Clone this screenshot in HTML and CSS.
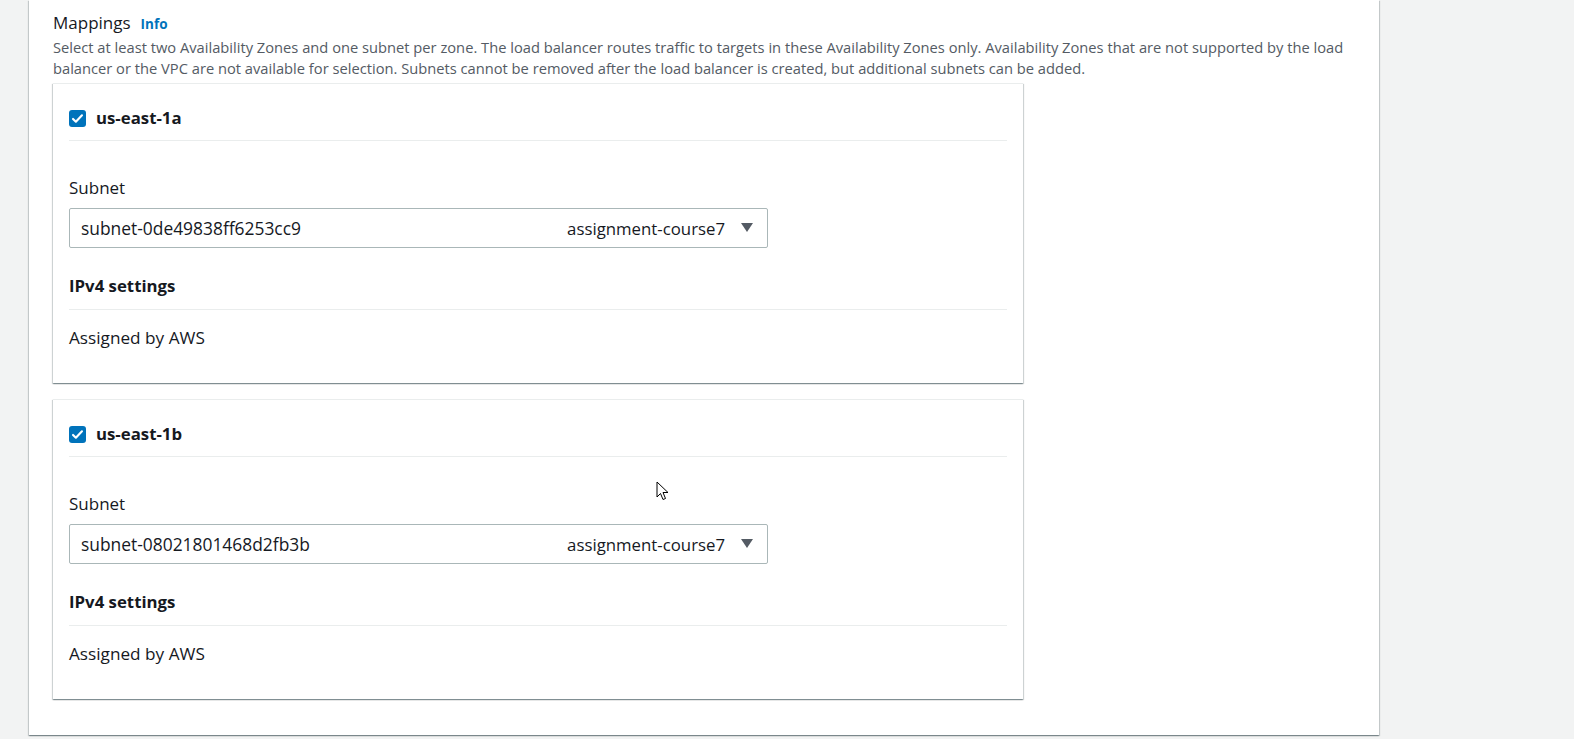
FILE: index.html
```html
<!DOCTYPE html>
<html>
<head>
<meta charset="utf-8">
<link rel="stylesheet" href="styles.css">
</head>
<body>
<div class="panel">
  <div class="heading">
    <span class="title">Mappings</span>
    <span class="info">Info</span>
  </div>
  <p class="desc">Select at least two Availability Zones and one subnet per zone. The load balancer routes traffic to targets in these Availability Zones only. Availability Zones that are not supported by the load balancer or the VPC are not available for selection. Subnets cannot be removed after the load balancer is created, but additional subnets can be added.</p>
  <div class="cards">
    <div class="card">
      <div class="card-head">
        <span class="check"><svg viewBox="0 0 16 16" width="13" height="13"><path d="M2.5 8.5l3.5 3.5 7.5-8" fill="none" stroke="#fff" stroke-width="2.6" stroke-linecap="round" stroke-linejoin="round"/></svg></span>
        <span class="zone">us-east-1a</span>
      </div>
      <div class="label">Subnet</div>
      <div class="select">
        <span class="sel-id">subnet-0de49838ff6253cc9</span>
        <span class="sel-tag">assignment-course7</span>
        <svg class="caret" viewBox="0 0 12 10" width="12" height="10"><path d="M0 0h12L6 9z" fill="#545b64"/></svg>
      </div>
      <div class="sub-head">IPv4 settings</div>
      <div class="value">Assigned by AWS</div>
    </div>
    <div class="card">
      <div class="card-head">
        <span class="check"><svg viewBox="0 0 16 16" width="13" height="13"><path d="M2.5 8.5l3.5 3.5 7.5-8" fill="none" stroke="#fff" stroke-width="2.6" stroke-linecap="round" stroke-linejoin="round"/></svg></span>
        <span class="zone">us-east-1b</span>
      </div>
      <div class="label">Subnet</div>
      <div class="select">
        <span class="sel-id">subnet-08021801468d2fb3b</span>
        <span class="sel-tag">assignment-course7</span>
        <svg class="caret" viewBox="0 0 12 10" width="12" height="10"><path d="M0 0h12L6 9z" fill="#545b64"/></svg>
      </div>
      <div class="sub-head">IPv4 settings</div>
      <div class="value">Assigned by AWS</div>
    </div>
  </div>
</div>
<svg class="cursor" width="14" height="20" viewBox="0 0 14 20"><path d="M1 1v15l3.5-3.5 2.5 6 2.5-1-2.5-6h5z" fill="#fff" stroke="#000" stroke-width="1"/></svg>
</body>
</html>
```

FILE: styles.css
```css
html, body {
  margin: 0;
  padding: 0;
}
body {
  background: #f2f3f3;
  font-family: "Open Sans", "Liberation Sans", sans-serif;
  color: #16191f;
  height: 739px;
  overflow: hidden;
}
.panel {
  margin-left: 29px;
  width: 1326px;
  padding: 10px 0 36px 24px;
  background: #fff;
  box-shadow: 0 1px 1px 0 rgba(0, 28, 36, 0.3), 1px 1px 1px 0 rgba(0, 28, 36, 0.15), -1px 1px 1px 0 rgba(0, 28, 36, 0.15);
}
.heading {
  display: flex;
  align-items: baseline;
  gap: 10px;
  height: 26px;
  line-height: 26px;
}
.title {
  font-size: 17px;
  color: #16191f;
}
.info {
  font-size: 13.5px;
  font-weight: 700;
  color: #0073bb;
}
.desc {
  margin: 1px 0 4px;
  font-size: 14.7px;
  line-height: 21px;
  color: #545b64;
  width: 1300px;
}
.cards {
  display: flex;
  flex-direction: column;
  gap: 16px;
  width: 970px;
}
.card {
  border-top: 1px solid #eaeded;
  padding: 0 16px 34px;
  box-shadow: 0 1px 1px 0 rgba(0, 28, 36, 0.3), 1px 1px 1px 0 rgba(0, 28, 36, 0.15), -1px 1px 1px 0 rgba(0, 28, 36, 0.15);
}
.card-head {
  display: flex;
  align-items: center;
  gap: 10px;
  padding: 23px 0 11px;
  height: 22px;
  border-bottom: 1px solid #eaeded;
}
.check {
  width: 17px;
  height: 17px;
  border-radius: 3px;
  background: #0073bb;
  display: flex;
  align-items: center;
  justify-content: center;
}
.zone {
  font-size: 16.8px;
  font-weight: 700;
  line-height: 22px;
}
.label {
  margin-top: 36px;
  font-size: 17px;
  line-height: 22px;
}
.select {
  margin-top: 9px;
  width: 672px;
  height: 38px;
  border: 1px solid #aab7b8;
  border-radius: 2px;
  display: flex;
  align-items: center;
  padding: 0 14px 0 11px;
  font-size: 17px;
}
.sel-id {
  flex: 1;
  font-size: 17.4px;
}
.sel-tag {
  margin-right: 16px;
  font-size: 16.8px;
}
.caret {
  display: block;
}
.sub-head {
  margin-top: 27px;
  font-size: 16.8px;
  font-weight: 700;
  line-height: 22px;
  padding-bottom: 12px;
  border-bottom: 1px solid #eaeded;
}
.value {
  margin-top: 17px;
  font-size: 17.2px;
  line-height: 22px;
}
.cursor {
  position: absolute;
  left: 656px;
  top: 481px;
}
```
